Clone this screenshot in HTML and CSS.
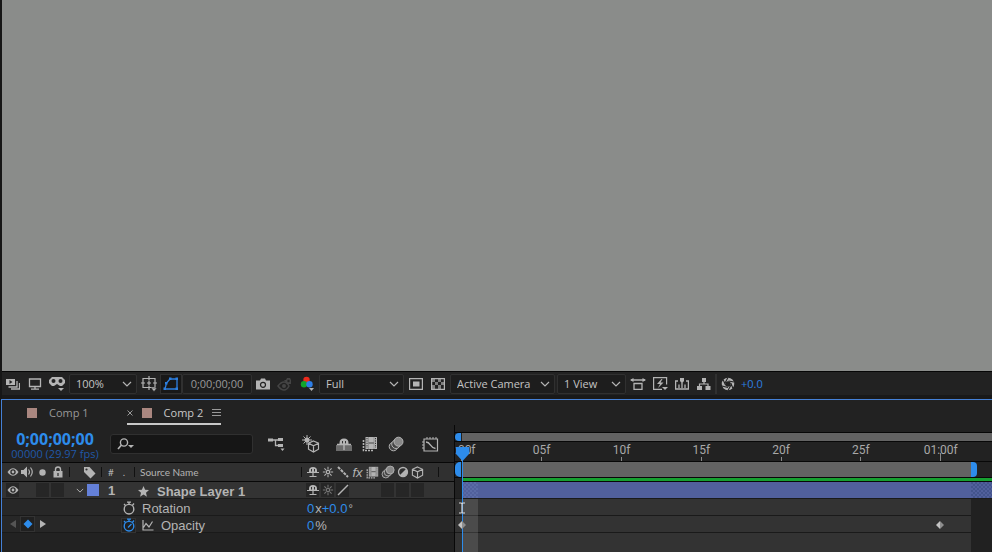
FILE: index.html
```html
<!DOCTYPE html>
<html lang="en">
<head>
  <meta charset="UTF-8" />
  <meta name="viewport" content="width=device-width, initial-scale=1.0"/>
  <title>Comp 2</title>
  <link rel="stylesheet" href="styles.css">
</head>
<body>
  <!-- shared icons -->
  <svg class="symbols" aria-hidden="true">
    <symbol id="chevron" viewBox="0 0 10 6"><path d="M1 1l4 4 4-4" fill="none" stroke="currentColor" stroke-width="1.2"/></symbol>
    <symbol id="eye" viewBox="0 0 14 12"><path d="M1.500 6Q4 2.200 7 2.200T12.500 6Q10 9.800 7 9.800T1.500 6z" fill="currentColor"/><circle cx="7" cy="6" r="2.700" fill="#292929"/><circle cx="7" cy="6" r="1.400" fill="currentColor"/></symbol>
    <symbol id="shy" viewBox="0 0 14 12"><path d="M3 6V4.500Q3 1 7 1t4 3.500V6z" fill="currentColor"/><path d="M5.500 3v2.500M8.500 3v2.500" stroke="#333"/><path d="M1 6.500h12M7 2v9M3.500 10.500h7" fill="none" stroke="currentColor" stroke-width="1.200"/></symbol>
    <symbol id="sun" viewBox="0 0 14 14"><path d="M7 1v3M7 10v3M1 7h3M10 7h3M2.800 2.800l2 2M9.200 9.200l2 2M2.800 11.200l2-2M9.200 4.800l2-2" stroke="currentColor" stroke-width="1.200"/><circle cx="7" cy="7" r="2" fill="none" stroke="currentColor" stroke-width="1.400"/></symbol>
    <symbol id="film" viewBox="0 0 16 16"><path d="M1.500 4v10.500H12" fill="none" stroke="currentColor" stroke-width="1.600" stroke-dasharray="2 1"/><path d="M3.500 1H15v12H3.500z" fill="currentColor"/><path d="M5 2v10M13.500 2v10" stroke="#333" stroke-dasharray="1.200 1.200"/><path d="M6.500 7h5.500" stroke="#444"/><path d="M6.500 1v12M12 1v12" stroke="#777" stroke-width=".5"/></symbol>
    <symbol id="blur" viewBox="0 0 16 16"><circle cx="5.500" cy="10.500" r="4.300" fill="#444" stroke="currentColor"/><circle cx="8" cy="8.200" r="4.300" fill="#444" stroke="currentColor"/><circle cx="10.500" cy="5.700" r="4.500" fill="#888" stroke="currentColor"/></symbol>
    <symbol id="cube" viewBox="0 0 14 14"><path d="M7 1l5.500 2.500v6.500L7 13l-5.500-3V3.500zM1.500 3.500L7 6.300l5.500-2.800M7 6.300V13" fill="none" stroke="currentColor" stroke-width="1.200"/></symbol>
    <symbol id="watch" viewBox="0 0 14 14"><circle cx="7" cy="8.200" r="4.800" fill="none" stroke="currentColor" stroke-width="1.400"/><path d="M5 1.200h4M7 1v3M2 3l1.500 1.500M12 2.500l-1.500 1.700" stroke="currentColor" stroke-width="1.300"/></symbol>
    <symbol id="diamond" viewBox="0 0 10 10"><path d="M5 0L0 5l5 5z" fill="#c4c4c4"/><path d="M5 0l5 5-5 5z" fill="#8d8d8d"/></symbol>
  </svg>

  <main class="viewer"></main>

  <div class="viewer-bar">
    <button class="icon-btn" aria-label="Always preview this view"><svg width="14" height="12" viewBox="0 0 14 12"><path d="M0 1h9v6H0z" fill="currentColor"/><path d="M3.500 2v4l3-2z" fill="#222"/><path d="M11 3v6H2.500M13.500 5v6H5" fill="none" stroke="currentColor" stroke-width="1.300"/></svg></button>
    <button class="icon-btn" aria-label="Primary viewer"><svg width="14" height="12" viewBox="0 0 14 12"><path d="M1.500 1h11v7.500h-11z" fill="none" stroke="currentColor" stroke-width="1.300"/><path d="M7 8.500v2M3 11.200h8" stroke="currentColor" stroke-width="1.300"/></svg></button>
    <button class="icon-btn" aria-label="VR view"><svg width="16" height="16" viewBox="0 0 16 16"><path d="M3 1h10l3 3v3l-3 3h-2L8 8 5 10H3L0 7V4z" fill="currentColor"/><circle cx="4.500" cy="5" r="2" fill="#222"/><circle cx="11.500" cy="5" r="2" fill="#222"/><path d="M9 12h6l-3 3z" fill="currentColor"/></svg></button>
    <div class="dropdown zoom-level">
      <select aria-label="Magnification"><option>100%</option><option>50%</option><option>200%</option></select>
      <svg width="10" height="6"><use href="#chevron"/></svg>
    </div>
    <button class="icon-btn" aria-label="Grid and guides"><svg width="16" height="16" viewBox="0 0 16 16"><path d="M2 2.500h12v9H2z" fill="none" stroke="currentColor" stroke-width="1.200"/><path d="M8 0v4.500M8 9.500V14M0 7h4M12 7h4M6 7h4M8 5v4" stroke="currentColor" stroke-width="1.200"/><path d="M10 12h6l-3 3.500z" fill="currentColor" stroke="#222" stroke-width=".5"/></svg></button>
    <button class="icon-btn active" aria-label="Toggle mask visibility"><svg width="16" height="14" viewBox="0 0 16 14"><path d="M2 12l1.500-6L7 2h7v10z" fill="none" stroke="currentColor" stroke-width="1.300"/><path d="M.5 10.500h2.500V13H.5zM2 5h2.500v2.500H2zM6 .5h2.500V3H6zM12.500.5H15V3h-2.500zM12.500 10.500H15V13h-2.500z" fill="currentColor"/></svg></button>
    <button class="time-box" aria-label="Preview time">0;00;00;00</button>
    <button class="icon-btn" aria-label="Take snapshot"><svg width="14" height="12" viewBox="0 0 14 12"><path d="M0 2.500h4L5 .5h4l1 2h4v9H0z" fill="currentColor"/><circle cx="7" cy="6.800" r="2.500" fill="none" stroke="#222" stroke-width="1.200"/></svg></button>
    <button class="icon-btn off" aria-label="Show snapshot"><svg width="16" height="14" viewBox="0 0 16 14"><path d="M1 9q3-4 6-4t5 4q-2 4-5 4T1 9z" fill="none" stroke="currentColor" stroke-width="1.500"/><circle cx="7" cy="9" r="2" fill="currentColor"/><path d="M7 3h2l1-2h3l1 2v4h-4z" fill="currentColor"/><circle cx="11.500" cy="4" r="1.200" fill="#222"/></svg></button>
    <button class="icon-btn" aria-label="Show channel"><svg width="16" height="16" viewBox="0 0 16 16"><circle cx="7.500" cy="4" r="3.200" fill="#ee2a1c"/><circle cx="5" cy="8.300" r="3.200" fill="#12a52b"/><circle cx="10.500" cy="8.300" r="3.200" fill="#2d7ee8"/><path d="M10 12h5l-2.500 3z" fill="currentColor"/></svg></button>
    <div class="dropdown resolution">
      <select aria-label="Resolution"><option>Full</option><option>Half</option><option>Quarter</option></select>
      <svg width="10" height="6"><use href="#chevron"/></svg>
    </div>
    <button class="icon-btn" aria-label="Region of interest"><svg width="14" height="12" viewBox="0 0 14 12"><path d="M.6.600h12.800v10.800H.6z" fill="none" stroke="currentColor" stroke-width="1.200"/><path d="M4 3.500h6.500v5H4z" fill="currentColor"/></svg></button>
    <button class="icon-btn" aria-label="Toggle transparency grid"><svg width="14" height="12" viewBox="0 0 14 12"><path d="M.6.600h12.800v10.800H.6z" fill="none" stroke="currentColor" stroke-width="1.200"/><path d="M1 1h3v3H1zM7 1h3v3H7zM4 4h3v3H4zM10 4h3v3h-3zM1 7h3v4H1zM7 7h3v4H7z" fill="currentColor" opacity=".65"/></svg></button>
    <div class="dropdown camera">
      <select aria-label="3D view"><option>Active Camera</option><option>Front</option></select>
      <svg width="10" height="6"><use href="#chevron"/></svg>
    </div>
    <div class="dropdown views">
      <select aria-label="View layout"><option>1 View</option><option>2 Views</option></select>
      <svg width="10" height="6"><use href="#chevron"/></svg>
    </div>
    <button class="icon-btn" aria-label="Pixel aspect ratio"><svg width="16" height="12" viewBox="0 0 16 12"><path d="M1 2h14M4 5.500h8v6H4z" fill="none" stroke="currentColor" stroke-width="1.300"/><path d="M3.500 0v4L0 2zM12.500 0v4L16 2z" fill="currentColor"/></svg></button>
    <button class="icon-btn" aria-label="Fast previews"><svg width="15" height="14" viewBox="0 0 15 14"><path d="M9 12.400H.6V.6h13v7" fill="none" stroke="currentColor" stroke-width="1.200"/><path d="M8.500 2L4 7h3l-2 4 5.500-5.500h-3L9.500 2z" fill="currentColor"/><path d="M9 10h6l-3 3z" fill="currentColor"/></svg></button>
    <button class="icon-btn" aria-label="Timeline"><svg width="14" height="12" viewBox="0 0 14 12"><path d="M3 3H.6v8h12.800V3H11M4 10V6.500M7 10V5M10 10V6.500" fill="none" stroke="currentColor" stroke-width="1.300"/><path d="M5 0h4v3L7 5.500 5 3z" fill="currentColor"/></svg></button>
    <button class="icon-btn" aria-label="Flowchart"><svg width="14" height="12" viewBox="0 0 14 12"><path d="M5 0h4v4H5zM0 8h5v4H0zM8.500 8h5v4h-5z" fill="currentColor"/><path d="M7 4v2M2.500 8V6h8.500v2" fill="none" stroke="currentColor" stroke-width="1.200"/></svg></button>
    <span class="divider"></span>
    <button class="icon-btn" aria-label="Reset exposure"><svg width="14" height="14" viewBox="0 0 14 14"><circle cx="7" cy="7" r="4.500" fill="none" stroke="currentColor" stroke-width="3.500"/><path d="M7 .5L4 6M13 5L7.500 4M12 11.500L9.800 6M7 13.500L10 8M1 9l6 1.500M2 2.500L4.500 8" stroke="#222" stroke-width="1.100"/></svg></button>
    <button class="exposure" aria-label="Exposure">+0.0</button>
  </div>

  <section class="timeline">
    <nav class="tabs">
      <a class="tab" href="#comp1"><span class="comp-color"></span>Comp 1</a>
      <div class="tab current">
        <button class="close" aria-label="Close tab"><svg width="6" height="6" viewBox="0 0 6 6"><path d="M.5.5l5 5M5.500.5l-5 5" stroke="currentColor"/></svg></button>
        <a href="#comp2"><span class="comp-color"></span>Comp 2</a>
        <button class="menu" aria-label="Panel menu"><svg width="9" height="9" viewBox="0 0 9 9"><path d="M0 1.500h9M0 4.500h9M0 7.500h9" stroke="currentColor"/></svg></button>
      </div>
    </nav>

    <div class="panes">
      <div class="outline">
        <div class="controls">
          <div class="current-time">
            <button class="timecode" aria-label="Current time">0;00;00;00</button>
            <small>00000 (29.97 fps)</small>
          </div>
          <div class="search">
            <svg width="17" height="12" viewBox="0 0 17 12"><circle cx="7" cy="4.500" r="3.600" fill="none" stroke="currentColor" stroke-width="1.400"/><path d="M4.500 7L1 11" stroke="currentColor" stroke-width="1.600"/><path d="M11 7h6l-3 3z" fill="currentColor"/></svg>
            <input type="text" aria-label="Search layers">
          </div>
          <div class="toggles">
            <button aria-label="Mini flowchart"><svg width="18" height="14" viewBox="0 0 18 14"><path d="M0 1.500h5v3H0zM10 1h5v3h-5zM10 7h5v3h-5z" fill="currentColor"/><path d="M5 3h5M7.500 3v5.500H10" fill="none" stroke="currentColor" stroke-width="1.300"/><path d="M12.500 11.500h4l-2 2.500z" fill="currentColor"/></svg></button>
            <button class="gap-wide" aria-label="Draft 3D"><svg width="18" height="18" viewBox="0 0 18 18"><path d="M5 0v10M0 5h10M1.500 1.500l7 7M8.500 1.500l-7 7" stroke="currentColor"/><circle cx="5" cy="5" r="2.500" fill="currentColor"/><path d="M11.500 6l5 2.200v6l-5 2.800-5-2.800v-6zM6.500 8.200l5 2.600 5-2.600M11.500 10.800V17" fill="#222" stroke="currentColor" stroke-width="1.200"/></svg></button>
            <button class="gap-wide" aria-label="Hide shy layers"><svg width="16" height="15" viewBox="0 0 16 15"><path d="M0 8h16v6H0z" fill="#6c6c6c"/><path d="M3.500 7V6Q3.500 1.500 8 1.500T12.500 6v1z" fill="currentColor"/><path d="M6.500 4v2.500M9.500 4v2.500" stroke="#333"/><path d="M1 7.500h14M8 2v11" stroke="currentColor" stroke-width="1.400"/></svg></button>
            <button aria-label="Frame blending"><svg width="16" height="16"><use href="#film"/></svg></button>
            <button aria-label="Motion blur"><svg width="16" height="16"><use href="#blur"/></svg></button>
            <button class="gap-graph" aria-label="Graph editor"><svg width="17" height="16" viewBox="0 0 17 16"><path d="M2 3h13.500v12H2z" fill="none" stroke="currentColor" stroke-width="1.200"/><path d="M5 1v2M8 1v2M11 1v2M14 1v2M0 6h2M0 9h2M0 12h2" stroke="currentColor"/><path d="M4 6c5 0 4 6 9.500 6.500" fill="none" stroke="currentColor" stroke-width="1.300"/></svg></button>
          </div>
        </div>

        <div class="row header">
          <div class="av">
            <span><svg width="14" height="12"><use href="#eye"/></svg></span>
            <span><svg width="13" height="12" viewBox="0 0 13 12"><path d="M0 4h2.500L6 .5v11L2.500 8H0z" fill="currentColor"/><path d="M7.500 3.500q2 2.500 0 5M9.500 1.500q3.500 4.500 0 9" fill="none" stroke="currentColor" stroke-width="1.200"/></svg></span>
            <span><svg width="7" height="7" viewBox="0 0 7 7"><circle cx="3.500" cy="3.500" r="3.200" fill="currentColor"/></svg></span>
            <span><svg width="10" height="12" viewBox="0 0 10 12"><path d="M.5 5h9v6.500h-9z" fill="currentColor"/><path d="M2.500 5V3.200Q2.500 1 5 1t2.500 2.200V5" fill="none" stroke="currentColor" stroke-width="1.400"/><path d="M5 7v3" stroke="#333" stroke-width="1.300"/></svg></span>
          </div>
          <div class="label"><svg width="13" height="13" viewBox="0 0 13 13"><path d="M1 1h5.500l6 6.500-5 5L1 6z" fill="currentColor"/><circle cx="3.500" cy="3.500" r="1.100" fill="#333"/></svg></div>
          <div class="number"><span>#</span><span>.</span></div>
          <div class="name">Source Name</div>
          <div class="switches">
            <span><svg width="14" height="12"><use href="#shy"/></svg></span>
            <span><svg width="12" height="12"><use href="#sun"/></svg></span>
            <span><svg width="12" height="12" viewBox="0 0 12 12"><path d="M1 1l10 10" stroke="currentColor" stroke-width="2" stroke-dasharray="3 1"/></svg></span>
            <span class="fx">fx</span>
            <span><svg width="13" height="13"><use href="#film"/></svg></span>
            <span><svg width="14" height="14"><use href="#blur"/></svg></span>
            <span><svg width="12" height="12" viewBox="0 0 12 12"><circle cx="6" cy="6" r="4.500" fill="none" stroke="currentColor" stroke-width="1.300"/><path d="M9.200 2.800a4.500 4.500 0 0 1-6.400 6.400z" fill="currentColor"/></svg></span>
            <span><svg width="13" height="13"><use href="#cube"/></svg></span>
          </div>
        </div>

        <div class="row layer">
          <div class="av">
            <button class="cell" aria-label="Video"><svg width="14" height="12"><use href="#eye"/></svg></button>
            <span></span>
            <button class="cell" aria-label="Solo"></button>
            <button class="cell" aria-label="Lock"></button>
          </div>
          <div class="label"><svg width="8" height="5"><use href="#chevron"/></svg><span class="layer-color"></span></div>
          <div class="number">1</div>
          <div class="name"><svg width="11" height="11" viewBox="0 0 11 11"><path d="M5.500 0l1.600 3.800 3.900.3-3 2.600.9 4.100-3.400-2.200-3.400 2.200.9-4.100-3-2.600 3.900-.3z" fill="currentColor"/></svg>Shape Layer 1</div>
          <div class="switches">
            <button class="cell" aria-label="Shy"><svg width="14" height="12"><use href="#shy"/></svg></button>
            <button class="cell dim" aria-label="Collapse"><svg width="12" height="12"><use href="#sun"/></svg></button>
            <button class="cell" aria-label="Quality"><svg width="12" height="12" viewBox="0 0 12 12"><path d="M1 11L11 1" stroke="currentColor" stroke-width="1.400"/></svg></button>
            <span></span>
            <span></span>
            <button class="cell" aria-label="Motion blur"></button>
            <button class="cell" aria-label="Adjustment layer"></button>
            <button class="cell" aria-label="3D layer"></button>
          </div>
        </div>

        <div class="row property">
          <div class="av"></div>
          <div class="prop-name">
            <button class="stopwatch" aria-label="Animate rotation"><svg width="14" height="14"><use href="#watch"/></svg></button>
            Rotation
          </div>
          <div class="prop-value"><b>0</b>x<b>+0.0</b><span class="degree">°</span></div>
        </div>

        <div class="row property">
          <div class="av">
            <button class="key-nav off" aria-label="Previous keyframe"><svg width="6" height="8" viewBox="0 0 6 8"><path d="M6 0v8L0 4z" fill="currentColor"/></svg></button>
            <button class="key-nav key" aria-label="Remove keyframe"><svg width="10" height="10" viewBox="0 0 10 10"><path d="M5 .5L9.500 5 5 9.500.5 5z" fill="currentColor"/></svg></button>
            <button class="key-nav" aria-label="Next keyframe"><svg width="6" height="8" viewBox="0 0 6 8"><path d="M0 0v8l6-4z" fill="currentColor"/></svg></button>
          </div>
          <div class="prop-name">
            <button class="stopwatch on" aria-label="Animate opacity"><svg width="14" height="14" viewBox="0 0 14 14"><use href="#watch"/><path d="M6 9.500L9.500 6" stroke="currentColor" stroke-width="1.300"/></svg></button>
            <button class="graph" aria-label="Show graph"><svg width="12" height="11" viewBox="0 0 12 11"><path d="M1 0v10h10.500M1.500 7.500l2.500-4 3 3.500 3.500-5.500" fill="none" stroke="currentColor" stroke-width="1.200"/></svg></button>
            Opacity
          </div>
          <div class="prop-value"><b>0</b>%</div>
        </div>
      </div>

      <div class="tracks">
        <div class="navigator"><span class="handle start"></span><span class="bar"></span></div>
        <div class="ruler">
          <span>0:00f</span>
          <span>05f</span>
          <span>10f</span>
          <span>15f</span>
          <span>20f</span>
          <span>25f</span>
          <span class="second">01:00f</span>
        </div>
        <div class="work-area"><span class="handle start"></span><span class="bar"></span><span class="handle end"></span></div>
        <div class="cache"></div>
        <div class="lane layer-lane"><span class="clip"></span><span class="outside"></span></div>
        <div class="lanes">
          <div class="lane"></div>
          <div class="lane">
            <svg class="keyframe" style="left: 7px" width="8" height="10"><use href="#diamond"/></svg>
            <svg class="keyframe" style="left: 94%" width="8" height="10"><use href="#diamond"/></svg>
          </div>
          <div class="lane rest"></div>
          <span class="frame"></span>
        </div>
        <div class="playhead"><svg width="13" height="14" viewBox="0 0 13 14"><path d="M0 0h13v7l-6.500 7L0 7z" fill="#2d8ceb"/></svg></div>
        <svg class="cursor" width="8" height="12" viewBox="0 0 8 12"><path d="M1 1h2l1 .5L5 1h2M4 1v10M1 11h2l1-.5 1 .5h2" fill="none" stroke="#ddd" stroke-width="1.200"/></svg>
      </div>
    </div>
  </section>
</body>
</html>
```
FILE: styles.css
```css
* {
  box-sizing: border-box;
}

body {
  margin: 0;
  min-height: 100vh;
  display: flex;
  flex-direction: column;
  background: #161616;
  color: #b4b4b4;
  font-family: "Open Sans", "Noto Sans", sans-serif;
  font-size: 11px;
  overflow: hidden;
}

button, input, select {
  font: inherit;
  color: inherit;
  background: none;
  border: none;
  margin: 0;
  padding: 0;
}

button {
  display: flex;
  align-items: center;
  justify-content: center;
}

a {
  color: inherit;
  text-decoration: none;
}

svg {
  display: block;
  flex: none;
}

.symbols {
  position: absolute;
  width: 0;
  height: 0;
}

.viewer {
  flex: 1;
  margin-left: 2px;
  background: #8a8c8a;
}

/* Viewer footer */
.viewer-bar {
  display: flex;
  align-items: center;
  height: 28px;
  margin-left: 2px;
  border-top: 1px solid #060606;
  border-bottom: 4px solid #191919;
  background: #222;
}

.icon-btn {
  flex: none;
  width: 22px;
  height: 20px;
}

.icon-btn.active {
  color: #2d7fe0;
  background: #181818;
  border: 1px solid #303030;
}

.icon-btn.off {
  color: #444;
}

.dropdown {
  position: relative;
  flex: none;
  height: 20px;
  margin: 0 1px;
  border: 1px solid #303030;
  border-radius: 2px;
  background: #1d1d1d;
}

.dropdown select {
  appearance: none;
  width: 100%;
  height: 18px;
  padding: 0 6px;
  color: #c4c4c4;
}

.dropdown svg {
  position: absolute;
  top: 6px;
  right: 4px;
  pointer-events: none;
}

.zoom-level {
  width: 68px;
}

.resolution {
  width: 85px;
}

.camera {
  width: 105px;
}

.views {
  width: 69px;
}

.time-box {
  flex: none;
  width: 70px;
  height: 20px;
  border: 1px solid #303030;
  border-radius: 2px;
  background: #1d1d1d;
  color: #999;
}

.divider {
  width: 2px;
  height: 20px;
  background: #303030;
}

.exposure {
  padding: 0 2px;
  color: #2d7fe0;
}

/* Timeline panel */
.timeline {
  margin-left: 1px;
  border-top: 1px solid #4480d6;
  border-left: 1px solid #4480d6;
  background: #222;
}

.tabs {
  display: flex;
  height: 25px;
  margin-left: 25px;
  gap: 38px;
}

.tab, .tab a {
  display: flex;
  align-items: center;
  color: #999;
}

.tab {
  border-bottom: 2px solid transparent;
  padding-top: 2px;
}

.comp-color {
  width: 10px;
  height: 10px;
  margin-right: 12px;
  background: #aa8780;
}

.tab.current {
  border-bottom-color: #c8c8c8;
}

.tab.current a {
  color: #c8c8c8;
}

.close {
  margin-right: 9px;
}

.menu {
  margin-left: 9px;
}

.panes {
  display: flex;
}

.outline {
  flex: none;
  width: 453px;
  padding-top: 4px;
  border-right: 1px solid #080808;
}

.controls {
  display: flex;
  align-items: center;
  height: 33px;
  padding: 0 10px 3px;
}

.current-time {
  display: flex;
  flex-direction: column;
  align-items: center;
  width: 86px;
  margin-right: 12px;
  padding-top: 3px;
  color: #2058a8;
  white-space: nowrap;
}

.timecode {
  color: #2d8ceb;
  font-size: 16px;
  font-weight: bold;
  line-height: 16px;
}

.current-time small {
  font-size: 11px;
  line-height: 14px;
}

.search {
  display: flex;
  align-items: center;
  width: 143px;
  height: 20px;
  padding-left: 6px;
  border: 1px solid #303030;
  border-radius: 3px;
  background: #161616;
}

.search input {
  flex: 1;
  min-width: 0;
}

.toggles {
  display: flex;
  align-items: center;
  margin-left: 15px;
  gap: 10px;
}

.gap-wide {
  margin-left: 6px;
}

.gap-graph {
  margin-left: 8px;
}

.row {
  display: flex;
  height: 17px;
  padding-left: 3px;
  border-bottom: 1px solid #1a1a1a;
  background: #272727;
}

.row.header {
  height: 20px;
  border-top: 1px solid #080808;
  border-bottom-color: #080808;
  background: #303030;
  font-family: Lato, sans-serif;
  font-size: 10px;
}

.row.layer {
  background: #333;
  font-family: "Liberation Sans", Arial, sans-serif;
  font-size: 13px;
  font-weight: bold;
}

.row > div {
  display: flex;
  align-items: center;
}

.header > div {
  position: relative;
}

.header > div::after {
  content: "";
  position: absolute;
  right: 0;
  top: 4px;
  bottom: 4px;
  width: 1px;
  background: #111;
}

.av {
  width: 65px;
}

.av > *, .switches > * {
  display: flex;
  align-items: center;
  justify-content: center;
  width: 15px;
  height: 16px;
}

.label {
  width: 32px;
  justify-content: flex-end;
  padding-right: 6px;
}

.layer .label {
  gap: 3px;
  padding-right: 3px;
}

.layer-color {
  width: 12px;
  height: 12px;
  background: #6480d8;
}

.number {
  width: 33px;
  padding-left: 6px;
  gap: 9px;
}

.name {
  width: 167px;
  padding-left: 5px;
}

.layer .name {
  padding-top: 2px;
  padding-left: 3px;
  gap: 8px;
}

.switches {
  width: 137px;
  padding-left: 3px;
}

.cell {
  border: 1px solid #333;
  background: #262626;
}

.cell.dim {
  color: #777;
}

.fx {
  font-family: "Liberation Sans", Arial, sans-serif;
  font-size: 13px;
  font-style: italic;
}

.property {
  font-family: "Liberation Sans", Arial, sans-serif;
  font-size: 13px;
}

.prop-name, .prop-value {
  padding-top: 2px;
}

.prop-name {
  width: 237px;
  padding-left: 51px;
}

.stopwatch {
  width: 15px;
  height: 15px;
  margin-right: 6px;
}

.stopwatch.on, .key-nav.key {
  color: #2d8ceb;
  border: 1px solid #333;
  background: #202020;
}

.graph {
  margin-right: 7px;
}

.prop-value b {
  color: #2d8ceb;
  font-weight: normal;
  margin-right: 1px;
}

.degree {
  font-size: 11px;
}

.key-nav.off {
  color: #555;
}

/* Time graph */
.tracks {
  position: relative;
  flex: 1;
  min-width: 0;
  display: flex;
  flex-direction: column;
  margin-top: 7px;
  overflow: hidden;
}

.navigator {
  display: flex;
  height: 10px;
  border-top: 1px solid #080808;
  border-bottom: 1px solid #080808;
}

.bar {
  flex: 1;
  background: #636363;
}

.handle {
  width: 6px;
  background: #2d8ceb;
}

.handle.start {
  margin-right: 1px;
  border-radius: 5px 0 0 5px;
}

.handle.end {
  border-radius: 0 4px 4px 0;
}

.ruler {
  display: flex;
  height: 19px;
  margin-left: -33px;
  color: #a8a8a8;
  font-family: Roboto, sans-serif;
  font-size: 12px;
  line-height: 16px;
}

.ruler span {
  flex: none;
  width: 14%;
  text-align: center;
  background: linear-gradient(#888, #888) center bottom / 1px 4px no-repeat;
}

.ruler .second {
  background-size: 1px 8px;
}

.work-area {
  display: flex;
  height: 17px;
  padding-right: 15px;
  border-top: 1px solid #080808;
  border-bottom: 1px solid #080808;
}

.cache {
  height: 4px;
  margin-left: 7px;
  border-bottom: 1px solid #080808;
  background: #16a030;
}

.lane {
  position: relative;
  height: 17px;
  border-bottom: 1px solid #1a1a1a;
}

.layer-lane {
  display: flex;
  padding-left: 7px;
}

.clip {
  flex: 1;
  background:
    linear-gradient(90deg, transparent 16px, #51609c 16px),
    repeating-conic-gradient(#51609c 0 25%, #5a6ba6 0 50%) 0 0 / 4px 4px;
}

.outside {
  width: 21px;
  background: repeating-conic-gradient(#51609c 0 25%, #43548c 0 50%) 0 0 / 4px 4px;
}

.lanes {
  position: relative;
  border-right: 21px solid #212121;
  background: #333;
}

.lane.rest {
  height: 19px;
  border-bottom: none;
}

.frame {
  position: absolute;
  left: 8px;
  top: 0;
  bottom: 0;
  width: 15px;
  background: rgba(255, 255, 255, 0.12);
}

.keyframe {
  position: absolute;
  z-index: 1;
  top: 4px;
  margin-left: -4px;
}

.playhead {
  position: absolute;
  left: 1px;
  top: 15px;
  bottom: 0;
  width: 13px;
  background: linear-gradient(#2d8ceb, #2d8ceb) center / 1px 100% no-repeat;
}

.cursor {
  position: absolute;
  left: 3px;
  top: 70px;
}
```
